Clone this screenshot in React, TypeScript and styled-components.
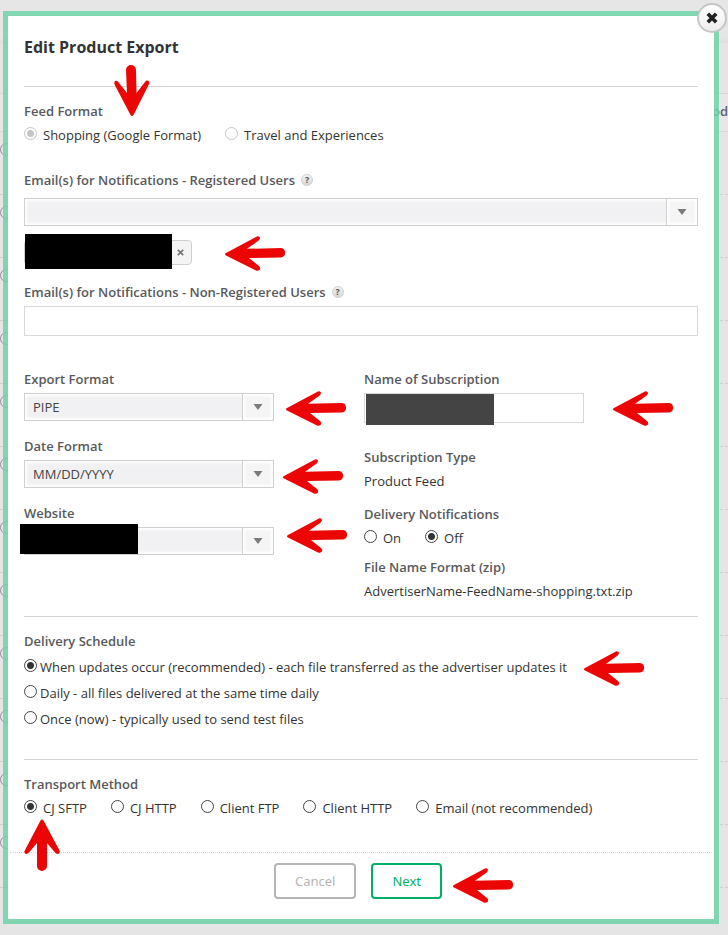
import React from "react";
import styled, { createGlobalStyle } from "styled-components";

const GlobalStyle = createGlobalStyle`
  * { box-sizing: border-box; }
  body {
    margin: 0;
    background: #e5e5e5;
    color: #333;
    font: 13px/20px "Open Sans", "Noto Sans", sans-serif;
  }
`;

const Page = styled.div`
  display: grid;
  min-height: 100vh;
  overflow: hidden;
`;

const Backdrop = styled.div`
  grid-area: 1 / 1;
  min-width: 0;
`;

const BackdropBar = styled.div`
  height: 43px;
  background: linear-gradient(#e6e6e6 38px, #dedede);
`;

const BackdropHeader = styled.div`
  display: flex;
  align-items: center;
  justify-content: flex-end;
  height: 39px;
  margin-top: 50px;
  padding-bottom: 4px;
  border: solid #d8d8d8;
  border-width: 1px 0;
  background: #e7e7e7;
  color: #5f6077;
  font-weight: 600;
`;

const BackdropRow = styled.div`
  display: flex;
  height: 63px;
  padding-top: 11px;
  border-bottom: 1px dashed #cfcfcf;

  &::before {
    content: "";
    width: 11px;
    height: 11px;
    border: 1px solid #8f8f98;
    border-radius: 50%;
  }
`;

const Dialog = styled.form`
  position: relative;
  grid-area: 1 / 1;
  align-self: start;
  min-width: 0;
  margin: 11px 9px 11px 3px;
  border: 5px solid rgba(110, 211, 168, 0.85);
  background: #fff;
  background-clip: padding-box;
`;

const CloseButton = styled.button`
  position: absolute;
  top: -13px;
  right: -13px;
  display: grid;
  place-items: center;
  width: 30px;
  height: 30px;
  padding: 0;
  border: 2px solid #c6c6c6;
  border-radius: 50%;
  background: linear-gradient(#fff, #ededed);
`;

const Title = styled.h1`
  margin: 0 16px;
  padding: 19px 0 27px;
  border-bottom: 1px solid #d3d3d3;
  font-size: 16px;
  line-height: 24px;
  font-weight: 700;
`;

const Section = styled.section<{ $bottom: number; $ruled?: boolean }>`
  margin: 0 16px;
  padding: 14px 0 ${(p) => p.$bottom}px;
  border-bottom: ${(p) => (p.$ruled ? "1px solid #d3d3d3" : "none")};
`;

const Group = styled.fieldset<{ $after?: number }>`
  min-width: 0;
  margin: 0 0 ${(p) => p.$after ?? 0}px;
  padding: 0;
  border: 0;
`;

const labelText = `
  display: flex;
  align-items: center;
  gap: 6px;
  margin: 0 0 4px;
  padding: 0;
  color: #58595b;
  font-weight: 600;
`;

const Legend = styled.legend`${labelText}`;
const Label = styled.label`${labelText}`;
const Caption = styled.dt`${labelText}`;

const Facts = styled.dl<{ $after?: number }>`
  margin: 0 0 ${(p) => p.$after ?? 0}px;

  dd { margin: 0; }
`;

const Choices = styled.div<{ $stacked?: boolean }>`
  display: flex;
  flex-flow: ${(p) => (p.$stacked ? "column" : "row wrap")};
  gap: ${(p) => (p.$stacked ? "6px" : "4px 24px")};
  padding-top: ${(p) => (p.$stacked ? 2 : 0)}px;
`;

const Choice = styled.label<{ $tight?: boolean }>`
  display: flex;
  align-items: flex-start;
  gap: ${(p) => (p.$tight ? 3 : 6)}px;
`;

const Radio = styled.input`
  flex: none;
  width: 13px;
  height: 13px;
  margin: 2px 0 0;
  appearance: none;
  border: 1px solid #444;
  border-radius: 50%;
  background: #fff;

  &:checked { background: radial-gradient(circle, #333 3px, #fff 4px); }
  &:disabled { border-color: #c4c4c4; }
  &:disabled:checked { background: radial-gradient(circle, #c4c4c4 3px, #fff 4px); }
`;

const Help = styled.button`
  width: 12px;
  height: 12px;
  padding: 0;
  border: 1px solid #d0d0d0;
  border-radius: 50%;
  background: linear-gradient(#f4f4f4, #d8d8d8);
  color: #555;
  font: 700 9px/10px "Open Sans", sans-serif;
`;

const SelectBox = styled.div`
  position: relative;
  display: grid;
  grid-template-columns: 1fr 31px;
  align-items: center;
  height: 28px;
  border: 1px solid #d0d0d0;
  background: #fff;
`;

const NativeSelect = styled.select`
  grid-area: 1 / 1 / 2 / 3;
  width: 100%;
  height: 26px;
  padding: 0 40px 0 8px;
  appearance: none;
  border: 0;
  border-radius: 0;
  background: #f1f1f3;
  box-shadow: inset 0 0 3px 2px #fff;
  color: #444;
  font: inherit;
`;

const SelectArrow = styled.span`
  z-index: 1;
  grid-area: 1 / 2;
  display: grid;
  place-items: center;
  height: 26px;
  border-left: 1px solid #d0d0d0;
  background: #f5f5f6;
  box-shadow: inset 0 0 3px 2px #fff;
  pointer-events: none;
`;

const TextInput = styled.input`
  display: block;
  width: 100%;
  height: 30px;
  padding: 0 8px;
  border: 1px solid #d8d8d8;
  background: #fff;
  font: inherit;
`;

const Field = styled.div<{ $after?: number }>`
  position: relative;
  margin-bottom: ${(p) => p.$after ?? 0}px;
`;

const Columns = styled.div`
  display: grid;
  grid-template-columns: minmax(0, 250px) minmax(0, 1fr);
  gap: 90px;
  padding-top: 33px;
`;

const NarrowField = styled(Field)`
  max-width: 220px;
`;

const Token = styled.div`
  position: relative;
  display: flex;
  justify-content: flex-end;
  width: 168px;
  height: 25px;
  margin: 14px 0 17px;
  border: 1px solid #cfcfcf;
  border-radius: 4px;
  background: #f4f4f5;
`;

const TokenRemove = styled.button`
  display: grid;
  place-items: center;
  width: 21px;
  padding: 0;
  border: 0;
  background: none;
`;

const Redaction = styled.span<{ $x: number; $y: number; $w: number; $h: number; $tone?: string }>`
  position: absolute;
  z-index: 2;
  left: ${(p) => p.$x}px;
  top: ${(p) => p.$y}px;
  width: ${(p) => p.$w}px;
  height: ${(p) => p.$h}px;
  background: ${(p) => p.$tone ?? "#000"};
`;

const Footer = styled.footer`
  display: flex;
  justify-content: center;
  gap: 15px;
  margin: 0 2px;
  padding: 10px 6px 20px 0;
  border-top: 1px dotted #d8d8d8;
`;

const Action = styled.button<{ $primary?: boolean }>`
  height: 36px;
  padding: 0 19px;
  border: 2px solid ${(p) => (p.$primary ? "#00af66" : "#b5b5b5")};
  border-radius: 4px;
  background: #fff;
  color: ${(p) => (p.$primary ? "#00af66" : "#b5b5b5")};
  font: 13px/20px "Noto Sans", "Open Sans", sans-serif;
`;

const Marker = styled.svg<{ $x: number; $y: number }>`
  position: absolute;
  z-index: 3;
  left: ${(p) => p.$x}px;
  top: ${(p) => p.$y}px;
  fill: #eb0505;
  pointer-events: none;
`;

const Caret = () => (
  <SelectArrow>
    <svg width="10" height="6" viewBox="0 0 10 6" aria-hidden="true">
      <path d="M0.5 0h9L5 6z" fill="#7b7b7d" />
    </svg>
  </SelectArrow>
);

const Cross = ({ size, color, weight }: { size: number; color: string; weight: number }) => (
  <svg width={size} height={size} viewBox="0 0 10 10" aria-hidden="true">
    <path d="M2 2l6 6M8 2L2 8" stroke={color} strokeWidth={weight} />
  </svg>
);

type Option = { text: string; checked?: boolean };

function RadioSet(props: { name: string; options: Option[]; stacked?: boolean; disabled?: boolean }) {
  const { name, options, stacked, disabled } = props;
  return (
    <Choices $stacked={stacked}>
      {options.map((o) => (
        <Choice key={o.text} $tight={stacked}>
          <Radio type="radio" name={name} defaultChecked={o.checked} disabled={disabled} />
          {o.text}
        </Choice>
      ))}
    </Choices>
  );
}

function Select({ id, value }: { id: string; value: string }) {
  return (
    <SelectBox>
      <NativeSelect id={id} defaultValue={value}>
        <option value={value}>{value}</option>
      </NativeSelect>
      <Caret />
    </SelectBox>
  );
}

type Direction = "left" | "up" | "down";

const shapes: Record<Direction, { w: number; h: number; d: string }> = {
  left: {
    w: 61,
    h: 36,
    d: "M1 17Q-1 18 1 19.5L31 34.5C34 36 37 32.5 34 30L24 22L56 21.5A4.8 4.8 0 0 0 56 12L22 12.8L33 5C37 2 34-1 31 1Z",
  },
  down: {
    w: 36,
    h: 52,
    d: "M12 5A5 5 0 0 1 22 5L22.5 28L31 17C33 14 37 16 34.500 20L19.500 50Q18 52 16.500 50L.8 20C-1 16 3 14 5 18L13 28Z",
  },
  up: {
    w: 36,
    h: 52,
    d: "M13 47A5 5 0 0 0 23 47V24L31 33.500C33 36 37 35 35.500 31.500L19.500 1.500Q18-.5 16.500 1.500L.8 31.500C-1 35 3 36 5 33.500L13 24Z",
  },
};

const markers: { dir: Direction; x: number; y: number }[] = [
  { dir: "down", x: 106, y: 49 },
  { dir: "left", x: 217, y: 220 },
  { dir: "left", x: 278, y: 375 },
  { dir: "left", x: 275, y: 443 },
  { dir: "left", x: 279, y: 502 },
  { dir: "left", x: 605, y: 375 },
  { dir: "left", x: 576, y: 635 },
  { dir: "up", x: 16, y: 803 },
  { dir: "left", x: 445, y: 852 },
];

const backdropRows = Array.from({ length: 12 }, (_, i) => i);

export default function App() {
  return (
    <Page>
      <GlobalStyle />
      <Backdrop aria-hidden="true">
        <BackdropBar />
        <BackdropHeader>od</BackdropHeader>
        {backdropRows.map((i) => (
          <BackdropRow key={i} />
        ))}
      </Backdrop>

      <Dialog role="dialog" aria-labelledby="dialog-title" onSubmit={(e) => e.preventDefault()}>
        <CloseButton type="button" aria-label="Close">
          <Cross size={14} color="#222" weight={2.6} />
        </CloseButton>
        <Title id="dialog-title">Edit Product Export</Title>

        <Section $bottom={15} $ruled>
          <Group $after={25}>
            <Legend>Feed Format</Legend>
            <RadioSet
              name="feed"
              disabled
              options={[{ text: "Shopping (Google Format)", checked: true }, { text: "Travel and Experiences" }]}
            />
          </Group>

          <Field $after={8}>
            <Label htmlFor="registered">
              Email(s) for Notifications - Registered Users
              <Help type="button" aria-label="About registered users">?</Help>
            </Label>
          </Field>
          <Select id="registered" value="" />
          <Token>
            <Redaction $x={0} $y={-7} $w={147} $h={35} />
            <TokenRemove type="button" aria-label="Remove">
              <Cross size={9} color="#777" weight={2} />
            </TokenRemove>
          </Token>

          <Label htmlFor="unregistered">
            Email(s) for Notifications - Non-Registered Users
            <Help type="button" aria-label="About non-registered users">?</Help>
          </Label>
          <TextInput id="unregistered" type="text" />

          <Columns>
            <div>
              <Field $after={15}>
                <Label htmlFor="export">Export Format</Label>
                <Select id="export" value="PIPE" />
              </Field>
              <Field $after={15}>
                <Label htmlFor="date">Date Format</Label>
                <Select id="date" value="MM/DD/YYYY" />
              </Field>
              <Field>
                <Label htmlFor="website">Website</Label>
                <Select id="website" value="" />
                <Redaction $x={-4} $y={21} $w={118} $h={30} />
              </Field>
            </div>
            <div>
              <NarrowField $after={24}>
                <Label htmlFor="subscription">Name of Subscription</Label>
                <TextInput id="subscription" type="text" />
                <Redaction $x={2} $y={25} $w={128} $h={31} $tone="#444" />
              </NarrowField>
              <Facts $after={13}>
                <Caption>Subscription Type</Caption>
                <dd>Product Feed</dd>
              </Facts>
              <Group $after={9}>
                <Legend>Delivery Notifications</Legend>
                <RadioSet name="notify" options={[{ text: "On" }, { text: "Off", checked: true }]} />
              </Group>
              <Facts>
                <Caption>File Name Format (zip)</Caption>
                <dd>AdvertiserName-FeedName-shopping.txt.zip</dd>
              </Facts>
            </div>
          </Columns>
        </Section>

        <Section $bottom={30} $ruled>
          <Group>
            <Legend>Delivery Schedule</Legend>
            <RadioSet
              name="schedule"
              stacked
              options={[
                {
                  text: "When updates occur (recommended) - each file transferred as the advertiser updates it",
                  checked: true,
                },
                { text: "Daily - all files delivered at the same time daily" },
                { text: "Once (now) - typically used to send test files" },
              ]}
            />
          </Group>
        </Section>

        <Section $bottom={34}>
          <Group>
            <Legend>Transport Method</Legend>
            <RadioSet
              name="transport"
              options={[
                { text: "CJ SFTP", checked: true },
                { text: "CJ HTTP" },
                { text: "Client FTP" },
                { text: "Client HTTP" },
                { text: "Email (not recommended)" },
              ]}
            />
          </Group>
        </Section>

        <Footer>
          <Action type="button">Cancel</Action>
          <Action type="submit" $primary>Next</Action>
        </Footer>

        {markers.map((m) => {
          const s = shapes[m.dir];
          return (
            <Marker
              key={`${m.x}-${m.y}`}
              $x={m.x}
              $y={m.y}
              width={s.w}
              height={s.h}
              viewBox={`0 0 ${s.w} ${s.h}`}
              aria-hidden="true"
            >
              <path d={s.d} />
            </Marker>
          );
        })}
      </Dialog>
    </Page>
  );
}
